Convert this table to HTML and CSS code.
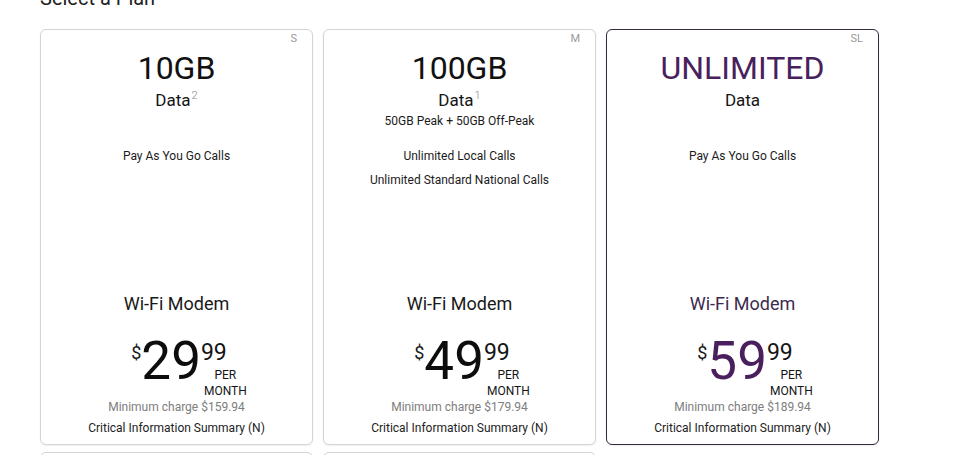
FILE: index.html
```html
<!DOCTYPE html>
<html lang="en">
<head>
<meta charset="utf-8">
<title>Select a Plan</title>
<link rel="stylesheet" href="styles.css">
</head>
<body>
<main class="page">
  <h2 class="title">Select a Plan</h2>
  <div class="plans">
    <div class="card">
      <span class="size">S</span>
      <div class="head">
        <div class="amount">10GB</div>
        <div class="unit">Data<sup>2</sup></div>
      </div>
      <ul class="features">
        <li>Pay As You Go Calls</li>
      </ul>
      <div class="device">Wi-Fi Modem</div>
      <div class="price">
        <span class="cur">$</span><span class="dollars">29</span><span class="side"><span class="cents">99</span><span class="per">PER<br>MONTH</span></span>
      </div>
      <div class="min">Minimum charge $159.94</div>
      <div class="cis">Critical Information Summary (N)</div>
    </div>

    <div class="card">
      <span class="size">M</span>
      <div class="head">
        <div class="amount">100GB</div>
        <div class="unit">Data<sup>1</sup></div>
        <div class="note">50GB Peak + 50GB Off-Peak</div>
      </div>
      <ul class="features">
        <li>Unlimited Local Calls</li>
        <li>Unlimited Standard National Calls</li>
      </ul>
      <div class="device">Wi-Fi Modem</div>
      <div class="price">
        <span class="cur">$</span><span class="dollars">49</span><span class="side"><span class="cents">99</span><span class="per">PER<br>MONTH</span></span>
      </div>
      <div class="min">Minimum charge $179.94</div>
      <div class="cis">Critical Information Summary (N)</div>
    </div>

    <div class="card card--selected">
      <span class="size">SL</span>
      <div class="head">
        <div class="amount">UNLIMITED</div>
        <div class="unit">Data</div>
      </div>
      <ul class="features">
        <li>Pay As You Go Calls</li>
      </ul>
      <div class="device">Wi-Fi Modem</div>
      <div class="price">
        <span class="cur">$</span><span class="dollars">59</span><span class="side"><span class="cents">99</span><span class="per">PER<br>MONTH</span></span>
      </div>
      <div class="min">Minimum charge $189.94</div>
      <div class="cis">Critical Information Summary (N)</div>
    </div>

    <div class="card card--stub"></div>
    <div class="card card--stub"></div>
  </div>
</main>
</body>
</html>
```

FILE: styles.css
```css
html, body {
  margin: 0;
  padding: 0;
  background: #ffffff;
}

body {
  font-family: Roboto, "Liberation Sans", Arial, sans-serif;
  color: #1b1b1b;
}

.page {
  padding: 0 40px;
}

.title {
  margin: -14px 0 19px;
  font-size: 20px;
  line-height: 24px;
  font-weight: 400;
  color: #222222;
}

.plans {
  display: grid;
  grid-template-columns: repeat(3, 273px);
  column-gap: 10px;
  row-gap: 7px;
}

.card {
  position: relative;
  box-sizing: border-box;
  height: 416px;
  display: flex;
  flex-direction: column;
  align-items: stretch;
  text-align: center;
  border: 1px solid #d4d4d4;
  border-radius: 6px;
  box-shadow: 0 1px 2px rgba(0, 0, 0, 0.07);
  padding: 0 0 6px;
  background: #ffffff;
}

.card--selected {
  border-color: #34283d;
}

.size {
  position: absolute;
  top: 2px;
  right: 15px;
  font-size: 11px;
  line-height: 13px;
  color: #9a9a9a;
}

.head {
  box-sizing: border-box;
  height: 114px;
  padding-top: 19px;
}

.amount {
  font-size: 32px;
  line-height: 38px;
  color: #111111;
}

.card--selected .amount {
  color: #4a1f5e;
}

.unit {
  margin-top: 3px;
  font-size: 17px;
  line-height: 20px;
  color: #151515;
}

.unit sup {
  position: relative;
  top: -7px;
  margin-left: 1px;
  font-size: 11px;
  line-height: 0;
  vertical-align: baseline;
  font-weight: 300;
  color: #8a8a8a;
}

.note {
  margin-top: 4px;
  font-size: 12px;
  line-height: 14px;
  color: #1b1b1b;
}

.features {
  flex: 1;
  list-style: none;
  margin: 0;
  padding: 0;
  font-size: 12px;
  line-height: 24px;
  color: #1b1b1b;
}

.device {
  margin-bottom: 20px;
  font-size: 18px;
  line-height: 22px;
  color: #1a1a1a;
}

.card--selected .device {
  color: #3d2a4e;
}

.price {
  display: flex;
  justify-content: center;
  align-items: flex-start;
  height: 64px;
  padding-left: 25px;
}

.cur {
  margin-top: 9px;
  font-size: 18px;
  line-height: 18px;
  color: #1a1a1a;
}

.dollars {
  font-size: 53px;
  line-height: 53px;
  color: #0d0d0d;
}

.card--selected .dollars {
  color: #4a1f5e;
}

.side {
  display: flex;
  flex-direction: column;
  align-items: flex-start;
  margin-top: 6px;
}

.cents {
  margin-bottom: 2px;
  font-size: 23px;
  line-height: 24px;
  color: #151515;
}

.per {
  margin-left: 3px;
  font-size: 12px;
  line-height: 16px;
  color: #151515;
  text-align: center;
}

.min {
  font-size: 12px;
  line-height: 16px;
  color: #7d7d7d;
}

.cis {
  margin-top: 3px;
  font-size: 12px;
  line-height: 20px;
  color: #222222;
}
```
